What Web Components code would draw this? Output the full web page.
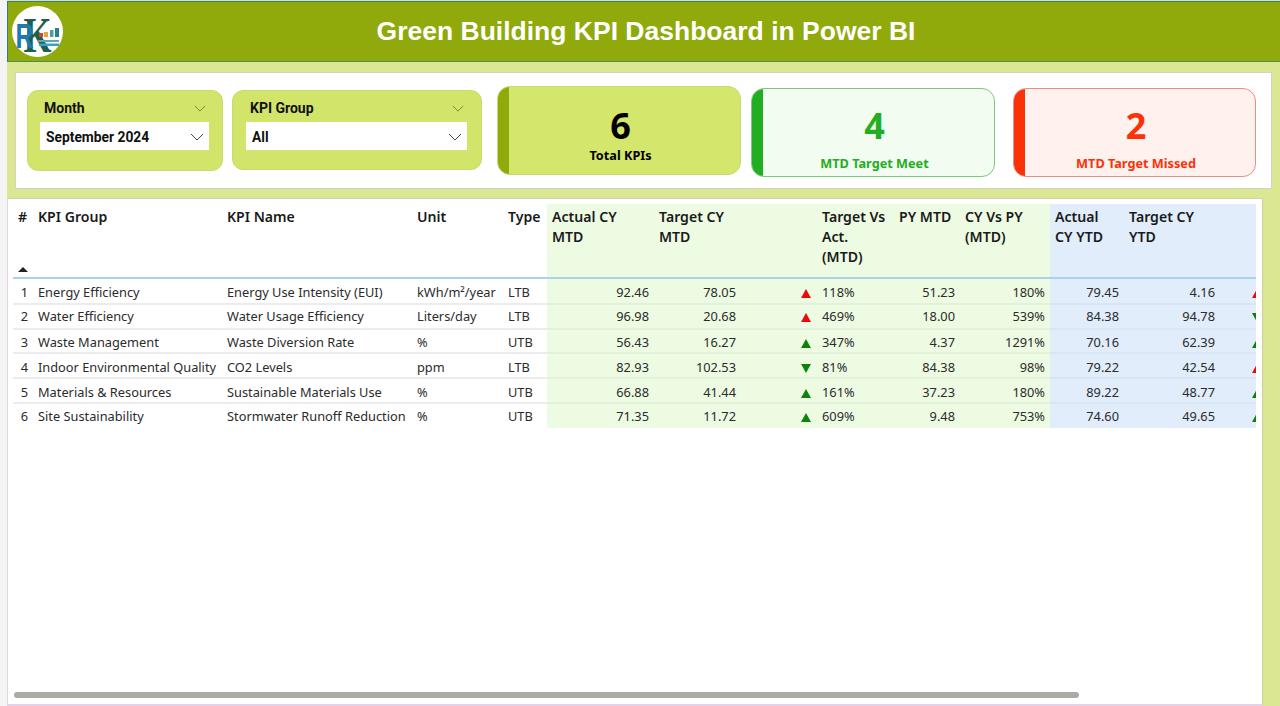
<!DOCTYPE html>
<html>
<head>
<meta charset="utf-8">
<title>Green Building KPI Dashboard</title>
<style>
    html, body { margin: 0; height: 100%; overflow: hidden; background: #f4f4f4; }
    body { padding-left: 7px; box-sizing: border-box; }
    gb-dashboard { height: 706px; }
</style>
</head>
<body>
<gb-dashboard>
    <gb-header title-text="Green Building KPI Dashboard in Power BI"></gb-header>
    <gb-filters>
        <gb-slicer label="Month" value="September 2024" style="width:196px;height:81px;margin:17px 0 0 11px;padding-left:12px;padding-right:13px"></gb-slicer>
        <gb-slicer label="KPI Group" value="All" style="width:250px;height:80px;margin:17px 0 0 9px"></gb-slicer>
        <gb-card number="6" label="Total KPIs" kind="total" style="width:244px;height:89px;margin:13px 0 0 15px"></gb-card>
        <gb-card number="4" label="MTD Target Meet" kind="meet" style="width:244px;height:89px;margin:15px 0 0 10px"></gb-card>
        <gb-card number="2" label="MTD Target Missed" kind="missed" style="width:243px;height:89px;margin:15px 0 0 18px"></gb-card>
    </gb-filters>
    <gb-table></gb-table>
</gb-dashboard>

<script>
class GbDashboard extends HTMLElement {
    connectedCallback() {
        this.attachShadow({mode: "open"})
        this.shadowRoot.innerHTML = `
            <style>
                :host {
                    display: flex;
                    flex-direction: column;
                    background: #dce793;
                    overflow: hidden;
                }
            </style>
            <slot></slot>
        `;
    }
}

class GbHeader extends HTMLElement {
    connectedCallback() {
        this.attachShadow({mode: "open"})
        this.shadowRoot.innerHTML = `
            <style>
                :host {
                    display: flex;
                    flex: none;
                    align-items: center;
                    height: 61px;
                    margin-top: 1px;
                    background: #90a90b;
                    border-top: 1px solid #2f7d8f;
                    border-bottom: 1px solid #4f8a5a;
                    border-left: 1px solid #2f7d8f;
                    box-sizing: border-box;
                }
                svg { flex: none; margin-left: 4px; width: 51px; height: 51px; }
                h1 {
                    flex: 1;
                    margin: 0;
                    padding-right: 51px;
                    text-align: center;
                    color: #fff;
                    font: bold 26.5px "Liberation Sans", Arial, sans-serif;
                }
            </style>
            <svg viewBox="0 0 51 51">
                <circle cx="25.5" cy="25.5" r="25.5" fill="#fff"/>
                <text transform="scale(.72 1)" font-weight="bold">
                    <tspan x="16" y="46" font-family="Liberation Serif" font-size="50" fill="#1f5f4e">K</tspan>
                    <tspan x="5" y="42" font-family="Liberation Sans" font-size="35" fill="#1c7bb0">R</tspan>
                </text>
                <rect x="27" y="27" width="4" height="4" fill="#d9432b"/>
                <rect x="32" y="26" width="4" height="5" fill="#e8a33a"/>
                <rect x="38" y="24" width="3.5" height="7" fill="#4f9e9a"/>
                <rect x="43" y="22" width="4" height="9" fill="#2a7f8e"/>
                <rect x="26" y="34" width="21" height="2" fill="#6aa0b8"/>
                <rect x="27" y="37.5" width="20" height="2.5" fill="#3aa0c8"/>
            </svg>
            <h1>${this.getAttribute("title-text")}</h1>
        `;
    }
}

class GbFilters extends HTMLElement {
    connectedCallback() {
        this.attachShadow({mode: "open"})
        this.shadowRoot.innerHTML = `
            <style>
                :host {
                    display: flex;
                    flex: none;
                    align-items: flex-start;
                    height: 117px;
                    margin: 10px 8px 0 8px;
                    background: #fff;
                    border: 1px solid #d3d3c0;
                    box-sizing: border-box;
                }
            </style>
            <slot></slot>
        `;
    }
}

const chevron = (w, h, stroke) => `
    <svg width="${w}" height="${h}" viewBox="0 0 14 8" fill="none" stroke="${stroke}" stroke-width="1">
        <path d="M1 1 L7 7 L13 1"/>
    </svg>`;

class GbSlicer extends HTMLElement {
    connectedCallback() {
        this.attachShadow({mode: "open"})
        this.shadowRoot.innerHTML = `
            <style>
                :host {
                    display: block;
                    flex: none;
                    box-sizing: border-box;
                    padding: 8px 14px 0 13px;
                    background: #d3e46a;
                    border: 1px solid #c9da70;
                    border-radius: 11px;
                    font-family: Roboto, "Liberation Sans", sans-serif;
                    color: #111;
                }
                .top {
                    display: flex;
                    justify-content: space-between;
                    align-items: center;
                    height: 18px;
                    padding: 0 3px 0 4px;
                    font-size: 14px;
                    font-weight: 700;
                }
                .box {
                    display: flex;
                    justify-content: space-between;
                    align-items: center;
                    height: 28px;
                    margin-top: 5px;
                    padding: 1px 5px 0 6px;
                    box-sizing: border-box;
                    background: #fff;
                    font-size: 13.8px;
                    font-weight: 700;
                }
            </style>
            <div class="top"><span>${this.getAttribute("label")}</span>${chevron(12, 7, "#6b7a3a")}</div>
            <div class="box"><span>${this.getAttribute("value")}</span>${chevron(14, 8, "#444")}</div>
        `;
    }
}

const cardKinds = {
    total:  {bg: "#d4e66c", border: "#c6da6e", stripe: "#90a90b", text: "#000", top: "19px", gap: "1px"},
    meet:   {bg: "#f2fcf0", border: "#7fc97f", stripe: "#22ae22", text: "#22ae22", top: "17px", gap: "9px"},
    missed: {bg: "#fef1ee", border: "#e88f85", stripe: "#f93208", text: "#f93208", top: "17px", gap: "9px"},
};

class GbCard extends HTMLElement {
    connectedCallback() {
        const k = cardKinds[this.getAttribute("kind")];
        this.attachShadow({mode: "open"})
        this.shadowRoot.innerHTML = `
            <style>
                :host {
                    display: flex;
                    position: relative;
                    flex: none;
                    flex-direction: column;
                    align-items: center;
                    box-sizing: border-box;
                    overflow: hidden;
                    padding: ${k.top} 0 0 3px;
                    border: 1px solid ${k.border};
                    border-radius: 13px;
                    background: ${k.bg};
                    color: ${k.text};
                }
                .stripe { position: absolute; left: -1px; top: -1px; bottom: -1px; width: 12px; background: ${k.stripe}; }
                .num { font: 700 36px/40px "Noto Sans", Roboto, sans-serif; }
                .label {
                    margin-top: ${k.gap};
                    font: 700 12.7px/16px "Noto Sans", Roboto, sans-serif;
                }
            </style>
            <div class="stripe"></div>
            <div class="num">${this.getAttribute("number")}</div>
            <div class="label">${this.getAttribute("label")}</div>
        `;
    }
}

const COLS = [20, 189, 190, 91, 44, 107, 87, 76, 77, 66, 90, 74, 96, 48];

const HEADS = [
    ["#", ""], ["KPI Group", ""], ["KPI Name", ""], ["Unit", ""], ["Type", ""],
    ["Actual CY<br>MTD", "g"], ["Target CY<br>MTD", "g"], ["", "g"], ["Target Vs<br>Act.<br>(MTD)", "g"],
    ["PY MTD", "g"], ["CY Vs PY<br>(MTD)", "g"],
    ["Actual<br>CY YTD", "b"], ["Target CY<br>YTD", "b"], ["", "b"],
];

const ROWS = [
    [1, "Energy Efficiency", "Energy Use Intensity (EUI)", "kWh/m²/year", "LTB", "92.46", "78.05", "ru", "118%", "51.23", "180%", "79.45", "4.16", "ru"],
    [2, "Water Efficiency", "Water Usage Efficiency", "Liters/day", "LTB", "96.98", "20.68", "ru", "469%", "18.00", "539%", "84.38", "94.78", "gd"],
    [3, "Waste Management", "Waste Diversion Rate", "%", "UTB", "56.43", "16.27", "gu", "347%", "4.37", "1291%", "70.16", "62.39", "gu"],
    [4, "Indoor Environmental Quality", "CO2 Levels", "ppm", "LTB", "82.93", "102.53", "gd", "81%", "84.38", "98%", "79.22", "42.54", "ru"],
    [5, "Materials & Resources", "Sustainable Materials Use", "%", "UTB", "66.88", "41.44", "gu", "161%", "37.23", "180%", "89.22", "48.77", "gu"],
    [6, "Site Sustainability", "Stormwater Runoff Reduction", "%", "UTB", "71.35", "11.72", "gu", "609%", "9.48", "753%", "74.60", "49.65", "gu"],
];

const arrow = (code) => {
    const fill = code[0] == "r" ? "#e60a0a" : "#0b830b";
    const pts = code[1] == "u" ? "0,9 5,0 10,9" : "0,0 10,0 5,9";
    return `<svg width="10" height="9" viewBox="0 0 10 9"><polygon points="${pts}" fill="${fill}"/></svg>`;
};

class GbTable extends HTMLElement {
    connectedCallback() {
        const bg = (i) => i >= 11 ? "b" : i >= 5 ? "g" : "";
        const head = HEADS.map(([t, c], i) =>
            `<th class="${c}">${i == 0 ? t + '<span class="sort"></span>' : t}</th>`).join("");
        const body = ROWS.map((r) => "<tr>" + r.map((v, i) => {
            let cls = bg(i);
            if (i == 0) cls += " idx";
            if (i >= 5 && i != 7 && i != 8 && i != 13) cls += " num";
            if (i == 7 || i == 13) return `<td class="${cls} ico">${arrow(v)}</td>`;
            return `<td class="${cls}">${String(v).replace("&", "&amp;")}</td>`;
        }).join("") + "</tr>").join("");
        this.attachShadow({mode: "open"})
        this.shadowRoot.innerHTML = `
            <style>
                :host {
                    display: block;
                    position: relative;
                    flex: 1;
                    margin: 9px 17px 0 0;
                    padding: 5px 6px 0 5px;
                    background: #fff;
                    border-top: 1px solid #cfd0b8;
                    border-right: 1px solid #cfcf9e;
                    border-left: 1px solid #e2d3e6;
                    border-bottom: 2px solid #e2d3e6;
                    box-sizing: border-box;
                    overflow: hidden;
                }
                .clip { overflow: hidden; }
                table {
                    width: ${COLS.reduce((a, b) => a + b, 0)}px;
                    table-layout: fixed;
                    border-collapse: collapse;
                    font-family: "Noto Sans", "Open Sans", sans-serif;
                    color: #2b2b2b;
                    font-size: 12.8px;
                }
                th {
                    position: relative;
                    height: 74px;
                    padding: 3px 0 0 5px;
                    box-sizing: border-box;
                    vertical-align: top;
                    text-align: left;
                    font-size: 14.1px;
                    font-weight: 600;
                    line-height: 20px;
                    color: #1a1a1a;
                    white-space: nowrap;
                    border-bottom: 2px solid #a9d3ea;
                }
                td {
                    height: 25px;
                    padding: 2px 5px 0;
                    box-sizing: border-box;
                    white-space: nowrap;
                    overflow: hidden;
                    border-bottom: 2px solid #ececec;
                }
                .g, td.g { background: #eefbe3; }
                .b, td.b { background: #e1edfb; }
                td.g { border-bottom-color: #e4f1da; }
                td.b { border-bottom-color: #d9e5f2; }
                tr:nth-child(1) td { height: 26px; }
                tr:nth-child(2) td, tr:nth-child(6) td { padding-top: 0; padding-bottom: 1px; }
                tr:nth-child(3) td { height: 24px; }
                tr:last-child td { border-bottom: 0; }
                .num { text-align: right; }
                td.idx { text-align: right; padding-left: 0; }
                td.ico { text-align: right; padding-left: 0; padding-right: 6px; }
                .ico svg { display: inline-block; vertical-align: -1px; }
                .sort {
                    position: absolute;
                    left: 5px;
                    bottom: 5px;
                    width: 0;
                    height: 0;
                    border-left: 5px solid transparent;
                    border-right: 5px solid transparent;
                    border-bottom: 5px solid #222;
                }
                .bar {
                    position: absolute;
                    left: 6px;
                    bottom: 6px;
                    width: 1065px;
                    height: 6px;
                    border-radius: 4px;
                    background: #aaaaa6;
                }
            </style>
            <div class="clip">
                <table>
                    <colgroup>${COLS.map((w) => `<col style="width:${w}px">`).join("")}</colgroup>
                    <thead><tr>${head}</tr></thead>
                    <tbody>${body}</tbody>
                </table>
            </div>
            <div class="bar"></div>
        `;
    }
}

window.customElements.define('gb-dashboard', GbDashboard);
window.customElements.define('gb-header', GbHeader);
window.customElements.define('gb-filters', GbFilters);
window.customElements.define('gb-slicer', GbSlicer);
window.customElements.define('gb-card', GbCard);
window.customElements.define('gb-table', GbTable);
</script>
</body>
</html>
